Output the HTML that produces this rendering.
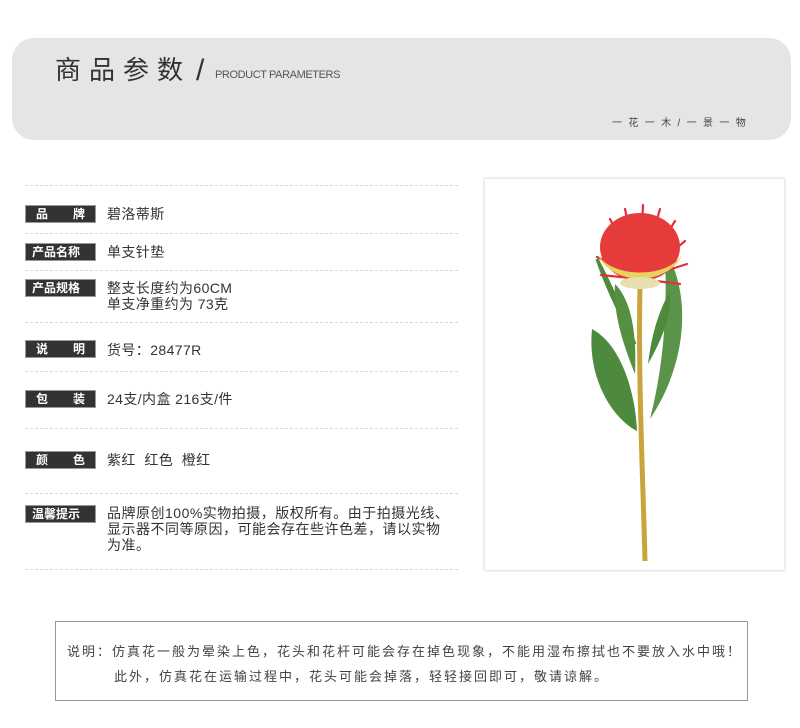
<!DOCTYPE html>
<html><head><meta charset="utf-8"><style>
*{margin:0;padding:0;box-sizing:border-box}
body{width:800px;height:728px;background:#fff;position:relative;overflow:hidden;font-family:"Liberation Sans","Noto Sans CJK SC",sans-serif;color:#333}
.hd{position:absolute;left:12px;top:38px;width:779px;height:102px;background:#e5e5e5;border-radius:22px}
.t1{position:absolute;left:55px;top:53px;font-size:26px;letter-spacing:8px;color:#333;line-height:34px}
.sl{position:absolute;left:196px;top:54px;font-size:30px;color:#333;font-weight:300;line-height:34px}
.t2{position:absolute;left:215px;top:69px;font-size:11px;color:#555;letter-spacing:-0.4px}
.t3{position:absolute;left:612px;top:114px;font-size:10px;color:#444;letter-spacing:1.8px}
.dl{position:absolute;left:25px;width:433px;border-top:1px dashed #d8d8d8}
.lb{position:absolute;left:25px;width:71px;height:18px;background:#333;border:1px solid #999;color:#fff;font-size:12px;font-weight:bold;line-height:16px;padding:0 10px;display:flex;justify-content:space-between}
.v{position:absolute;left:107px;font-size:14px;line-height:16px;color:#333;letter-spacing:0.4px;white-space:nowrap}
.img{position:absolute;left:485px;top:179px;width:299px;height:391px;background:#fff;box-shadow:0 0 2px 1px #ddd}
.nb{position:absolute;left:55px;top:621px;width:693px;height:80px;border:1px solid #999;font-size:13px;color:#444;letter-spacing:2px}
</style></head><body>
<div class="hd"></div>
<div class="t1">商品参数</div><div class="sl">/</div>
<div class="t2">PRODUCT PARAMETERS</div>
<div class="t3">一 花 一 木 / 一 景 一 物</div>

<div class="dl" style="top:185px"></div>
<div class="lb" style="top:205px"><span>品</span><span>牌</span></div><div class="v" style="top:206px">碧洛蒂斯</div>
<div class="dl" style="top:233px"></div>
<div class="lb" style="top:243px;padding:0 6px"><span>产品名称</span></div><div class="v" style="top:244px">单支针垫</div>
<div class="dl" style="top:270px"></div>
<div class="lb" style="top:279px;padding:0 6px"><span>产品规格</span></div><div class="v" style="top:280px">整支长度约为60CM<br>单支净重约为 73克</div>
<div class="dl" style="top:322px"></div>
<div class="lb" style="top:340px"><span>说</span><span>明</span></div><div class="v" style="top:342px">货号：28477R</div>
<div class="dl" style="top:371px"></div>
<div class="lb" style="top:390px"><span>包</span><span>装</span></div><div class="v" style="top:391px">24支/内盒 216支/件</div>
<div class="dl" style="top:428px"></div>
<div class="lb" style="top:451px"><span>颜</span><span>色</span></div><div class="v" style="top:452px">紫红&nbsp; 红色&nbsp; 橙红</div>
<div class="dl" style="top:493px"></div>
<div class="lb" style="top:505px;padding:0 6px"><span>温馨提示</span></div><div class="v" style="top:505px;letter-spacing:0.5px">品牌原创100%实物拍摄，版权所有。由于拍摄光线、<br>显示器不同等原因，可能会存在些许色差，请以实物<br>为准。</div>
<div class="dl" style="top:569px"></div>

<div class="img">
<svg width="299" height="391" viewBox="0 0 299 391">
<path d="M155 108 C153 200 158 300 160 382" stroke="#c9a43a" stroke-width="5" fill="none"/>
<path d="M107 150 C135 165 150 210 152 252 C128 240 102 200 107 150Z" fill="#4e8a3e"/>
<path d="M112 80 C128 110 140 140 150 165 C138 140 124 115 112 80Z" fill="#4e8a3e" stroke="#4e8a3e" stroke-width="3"/>
<path d="M130 105 C145 120 152 150 150 195 C138 165 128 135 130 105Z" fill="#558f42"/>
<path d="M180 72 C205 110 205 180 165 240 C180 180 182 130 180 72Z" fill="#5a9448"/>
<path d="M185 112 C172 135 166 160 163 185 C178 158 187 136 185 112Z" fill="#4e8a3e"/>
<g stroke="#e0303a" stroke-width="2.2" fill="none" stroke-linecap="round">
<path d="M155 100 L118 60"/><path d="M155 100 L112 78"/><path d="M155 100 L125 40"/><path d="M155 100 L140 30"/><path d="M155 100 L158 26"/><path d="M155 100 L175 30"/><path d="M155 100 L190 42"/><path d="M155 100 L200 62"/><path d="M155 100 L202 85"/><path d="M155 100 L195 105"/><path d="M155 100 L116 96"/>
</g>
<ellipse cx="155" cy="68" rx="40" ry="34" fill="#e53b3b"/>
<path d="M112 74 C125 100 185 100 198 74 C185 108 125 108 112 74Z" fill="#e8d45c"/>
<ellipse cx="155" cy="104" rx="20" ry="6" fill="#e6e0b0"/>
</svg>
</div>

<div class="nb">
<div style="position:absolute;left:11px;top:19px">说明：仿真花一般为晕染上色，花头和花杆可能会存在掉色现象，不能用湿布擦拭也不要放入水中哦！</div>
<div style="position:absolute;left:58px;top:44px">此外，仿真花在运输过程中，花头可能会掉落，轻轻接回即可，敬请谅解。</div>
</div>
</body></html>
